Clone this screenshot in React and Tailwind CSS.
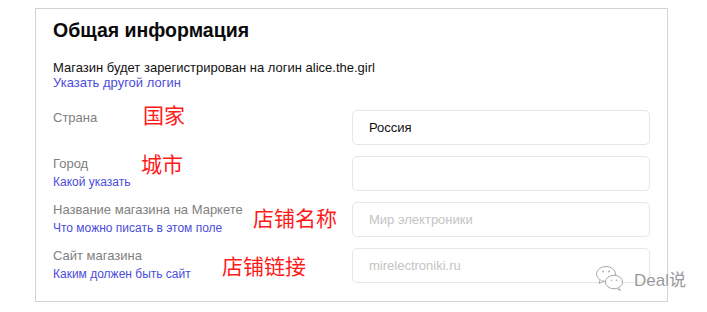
import React from "react";

const rows = [
  { label: "Страна", value: "Россия", cn: "国家", cnClass: "left-[90px] top-[-6px]" },
  { label: "Город", link: "Какой указать", value: "", cn: "城市", cnClass: "left-[88px] top-[-3px]" },
  { label: "Название магазина на Маркете", link: "Что можно писать в этом поле", placeholder: "Мир электроники", cn: "店铺名称", cnClass: "left-[200px] top-[5px]" },
  { label: "Сайт магазина", link: "Каким должен быть сайт", placeholder: "mirelectroniki.ru", cn: "店铺链接", cnClass: "left-[169px] top-[7px]" },
];

function WeChatIcon() {
  return (
    <svg width="30" height="26" viewBox="0 0 30 26" fill="none" stroke="#a8a8a8" strokeWidth="1">
      <ellipse cx="10" cy="9" rx="9.5" ry="7.5" fill="white" />
      <path d="M4 15 L3 18.5 L7.5 16.2" fill="white" />
      <circle cx="7" cy="6.5" r="0.9" fill="#a8a8a8" stroke="none" />
      <circle cx="13" cy="6.5" r="0.9" fill="#a8a8a8" stroke="none" />
      <ellipse cx="18" cy="17" rx="8.5" ry="6.8" fill="white" />
      <path d="M22.5 22.8 L24.5 25.5 L20.5 23.6" fill="white" />
      <circle cx="15.5" cy="15.2" r="0.8" fill="#a8a8a8" stroke="none" />
      <circle cx="20.5" cy="15.2" r="0.8" fill="#a8a8a8" stroke="none" />
    </svg>
  );
}

export default function App() {
  return (
    <div className="relative w-[707px] h-[312px] bg-white font-['Liberation_Sans',Arial,sans-serif] overflow-hidden">
      <div className="pt-[8px] pl-[35px]">
        <div className="w-[633px] h-[294px] border border-[#d2d2d2] pt-[9px] pl-[17px] pr-[17px]">
          <h1 className="text-[19.5px] leading-[24px] font-bold text-[#0a0a0a]">Общая информация</h1>
          <p className="mt-[18px] text-[13px] leading-[15px] text-[#111]">
            Магазин будет зарегистрирован на логин alice.the.girl
          </p>
          <a className="block text-[13px] leading-[15px] text-[#4b4ddb]">Указать другой логин</a>
          <div className="mt-[20px] flex flex-col gap-[11px]">
            {rows.map((r) => (
              <div key={r.label} className="relative flex justify-between h-[35px]">
                <div className="flex flex-col">
                  <span className="text-[13px] leading-[16px] text-[#808080]">{r.label}</span>
                  {r.link && (
                    <span className="mt-[2px] text-[12px] leading-[16px] text-[#4b4ddb]">{r.link}</span>
                  )}
                </div>
                <span
                  className={`absolute ${r.cnClass} text-[21px] leading-none text-[#ff1a1a] font-['Noto_Sans_CJK_SC',sans-serif]`}
                >
                  {r.cn}
                </span>
                <div className="w-[298px] h-[35px] border border-[#e6e6e6] rounded-[5px] flex items-center pl-[16px] text-[13px]">
                  {r.value ? (
                    <span className="text-[#111]">{r.value}</span>
                  ) : (
                    <span className="text-[#c4c4c4]">{r.placeholder}</span>
                  )}
                </div>
              </div>
            ))}
          </div>
        </div>
      </div>
      <div className="absolute left-[596px] top-[265px] flex items-center">
        <WeChatIcon />
        <span className="ml-[8px] mt-[4px] text-[17px] leading-none text-[#9a9a9a] [text-shadow:0_0_2px_white,0_0_2px_white] font-['Liberation_Sans','Noto_Sans_CJK_SC',sans-serif]">
          Deal说
        </span>
      </div>
    </div>
  );
}
